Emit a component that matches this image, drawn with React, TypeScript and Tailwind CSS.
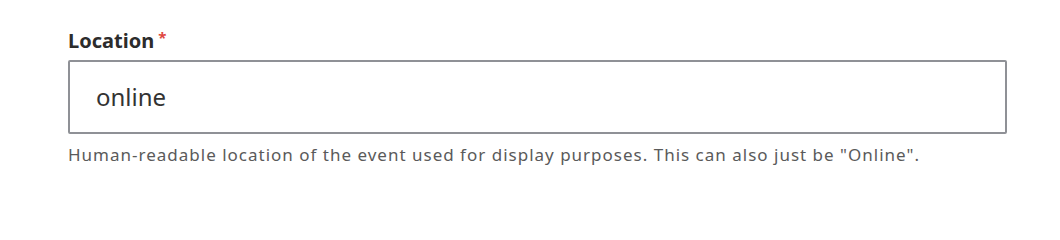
export default function App() {
  return (
    <div className="h-[204px] w-[1060px] bg-white pl-[68px] pt-[27px] font-['Noto_Sans',sans-serif]">
      <div className="w-[939px]">
        <label className="flex items-start text-[20px] font-bold leading-[28px] text-[#2c2c2c]">
          Location
          <span className="ml-[4px] mt-[-4px] text-[15px] text-[#e0473f]">*</span>
        </label>
        <div className="mt-[5px] flex h-[74px] items-center rounded-[2px] border-2 border-[#8f9196] px-[26px]">
          <span className="text-[24px] text-[#333333]">online</span>
        </div>
        <p className="mt-[9px] text-[17px] leading-[24px] tracking-[1px] text-[#5a5a5a]">
          Human-readable location of the event used for display purposes. This can also just be "Online".
        </p>
      </div>
    </div>
  );
}
